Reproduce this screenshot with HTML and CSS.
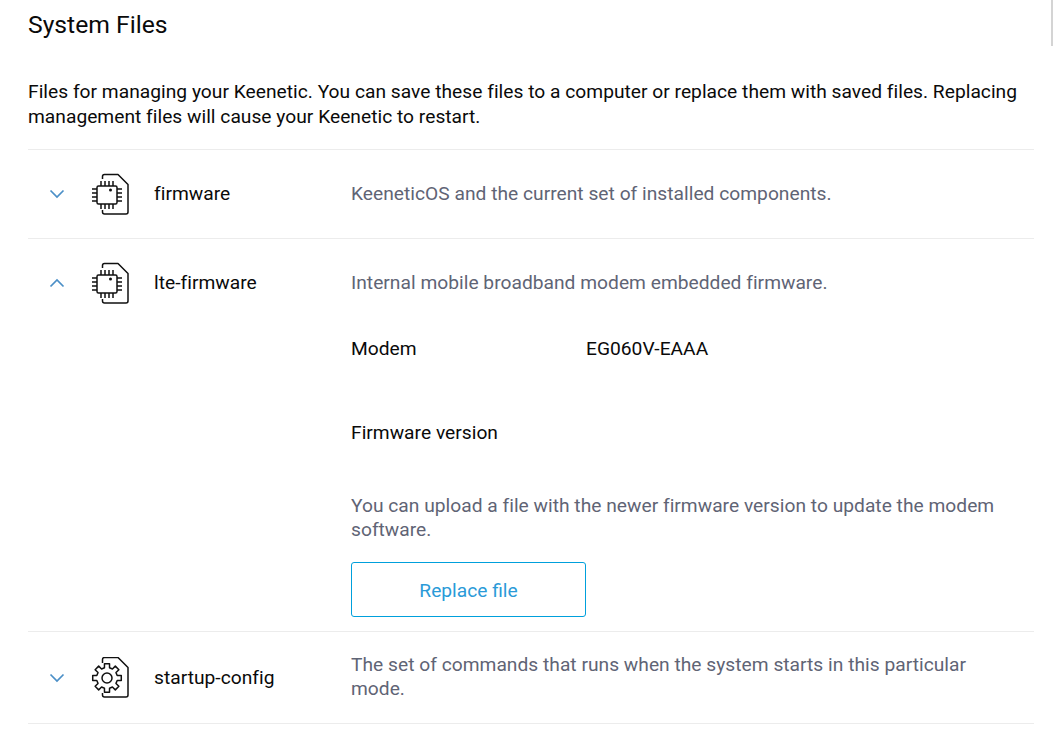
FILE: index.html
```html
<!DOCTYPE html>
<html lang="en">
<head>
<meta charset="utf-8">
<title>System Files</title>
<link rel="stylesheet" href="styles.css">
</head>
<body>
<div class="scrollbar"></div>
<main class="page">
  <h1 class="title">System Files</h1>
  <p class="intro">Files for managing your Keenetic. You can save these files to a computer or replace them with saved files. Replacing management files will cause your Keenetic to restart.</p>
  <section class="list">
    <article class="row row-firmware">
      <div class="head">
        <svg class="chev" viewBox="0 0 16 10"><path d="M1.5 1.5 8 8l6.5-6.5"/></svg>
        <svg class="ficon" viewBox="0 0 40 42"><use href="#chipfile"/></svg>
        <div class="name">firmware</div>
        <div class="desc">KeeneticOS and the current set of installed components.</div>
      </div>
    </article>
    <article class="row row-lte">
      <div class="head">
        <svg class="chev" viewBox="0 0 16 10"><path d="M1.5 8.5 8 2l6.5 6.5"/></svg>
        <svg class="ficon" viewBox="0 0 40 42"><use href="#chipfile"/></svg>
        <div class="name">lte-firmware</div>
        <div class="desc">Internal mobile broadband modem embedded firmware.</div>
      </div>
      <div class="details">
        <div class="kv kv-modem"><span class="k">Modem</span><span class="v">EG060V-EAAA</span></div>
        <div class="kv kv-fw"><span class="k">Firmware version</span></div>
        <p class="note">You can upload a file with the newer firmware version to update the modem software.</p>
        <button class="btn">Replace file</button>
      </div>
    </article>
    <article class="row row-startup">
      <div class="head">
        <svg class="chev" viewBox="0 0 16 10"><path d="M1.5 1.5 8 8l6.5-6.5"/></svg>
        <svg class="ficon" viewBox="0 0 40 42"><use href="#gearfile"/></svg>
        <div class="name">startup-config</div>
        <div class="desc">The set of commands that runs when the system starts in this particular mode.</div>
      </div>
    </article>
  </section>
</main>
<svg class="defs" width="0" height="0">
  <defs>
    <symbol id="chipfile" viewBox="0 0 40 42">
      <path class="ln" d="M12.500 6V3.500Q12.500 1.500 14.500 1.500H28L38 11.500V39Q38 41 36 41H14.500Q12.500 41 12.500 39V37"/>
      <rect class="ln wh" x="7" y="13" width="20" height="18" rx="1.500"/>
      <path class="ln" d="M11 13V8M15 13V8M19 13V8M23 13V8M11 31V36M15 31V36M19 31V36M23 31V36M7 16H2M7 20H2M7 24H2M7 28H2M27 16H32M27 20H32M27 24H32M27 28H32"/>
      <circle class="dot" cx="20.500" cy="17" r="1.500"/>
    </symbol>
    <symbol id="gearfile" viewBox="0 0 40 42">
      <path class="ln" d="M12.500 6V2.500Q12.500 0.500 14.500 0.500H28L38 10.500V38Q38 40 36 40H14.500Q12.500 40 12.500 38V36"/>
      <g transform="translate(17 21)">
        <path class="ln wh" d="M10.190-2.540 14.280-2.520 14.280 2.520 10.190 2.540 9 5.410 11.880 8.320 8.320 11.880 5.410 9 2.540 10.190 2.520 14.280-2.520 14.280-2.540 10.190-5.410 9-8.320 11.880-11.880 8.320-9 5.410-10.190 2.540-14.280 2.520-14.280-2.520-10.190-2.540-9-5.410-11.880-8.320-8.320-11.880-5.410-9-2.540-10.190-2.520-14.280 2.520-14.280 2.540-10.190 5.410-9 8.320-11.880 11.880-8.320 9-5.410Z"/>
        <circle class="ln" r="5"/>
      </g>
    </symbol>
  </defs>
</svg>
</body>
</html>
```
FILE: styles.css
```css
* { box-sizing: border-box; }
html, body { margin: 0; height: 736px; overflow: hidden; background: #fff; }
body { font-family: Roboto, "Liberation Sans", sans-serif; color: #0a0a0a; font-size: 19.2px; letter-spacing: 0.02px; }
.scrollbar { position: absolute; top: 0; right: 0; width: 2px; height: 46px; background: #d4d4d4; }
.defs { position: absolute; }
.page { padding: 0 19px 0 28px; }
.title { margin: 0; padding-top: 10px; font-size: 24.7px; line-height: 30px; font-weight: 400; letter-spacing: 0; }
.intro { margin: 39px 0 0; line-height: 25px; }
.list { margin-top: 20px; border-top: 1px solid #ececec; }
.row { border-bottom: 1px solid #ececec; }
.head { display: grid; grid-template-columns: 21px 16px 65px 221px 1fr; align-items: center; }
.row-firmware .head, .row-lte .head { height: 88px; }
.row-startup .head { height: 91px; }
.row-startup .desc { margin-top: -2px; }
.chev { grid-column: 2; width: 16px; height: 10px; fill: none; stroke: #4b8fc7; stroke-width: 1.7; }
.ficon { grid-column: 3; margin-left: 25px; width: 40px; height: 42px; overflow: visible; margin-top: -2px; margin-bottom: -2px; }
.name { line-height: 24px; padding-left: 24px; }
.desc { line-height: 24px; color: #5f6475; padding-right: 23px; }
.details { padding-left: 323px; }
.kv { display: grid; grid-template-columns: 235px 1fr; line-height: 24px; }
.kv-modem { margin-top: 10px; }
.kv-fw { margin-top: 60px; }
.note { margin: 49px 0 0; line-height: 24px; color: #5f6475; padding-right: 23px; }
.btn { display: block; margin: 20px 0 14px; padding: 2px 0 0; width: 235px; height: 55px; background: #fff; border: 1px solid #00a0dc; border-radius: 3px; color: #2a9ad8; font: 400 19.2px Roboto, sans-serif; }
.ln { fill: none; stroke: #111; stroke-width: 1.5; stroke-linejoin: round; }
.wh { fill: #fff; }
.dot { fill: #111; }
```
